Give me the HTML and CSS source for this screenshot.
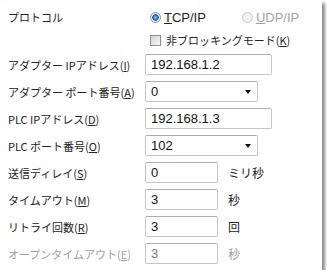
FILE: index.html
```html
<!DOCTYPE html>
<html lang="ja">
<head>
    <meta charset="UTF-8">
    <title>通信設定</title>
    <link rel="stylesheet" href="styles.css">
</head>
<body>
    <div class="panel">
        <div class="row-top">
            <div class="label">プロトコル</div>
            <div class="radio-group">
                <span class="radio checked"></span>
                <span class="opt"><u>T</u>CP/IP</span>
                <span class="radio disabled"></span>
                <span class="opt dim"><u>U</u>DP/IP</span>
            </div>
        </div>
        <div class="row-check">
            <span class="check"></span>
            <span class="jp">非ブロッキングモード(<u>K</u>)</span>
        </div>

        <div class="row">
            <div class="label">アダプター IPアドレス(<u>I</u>)</div>
            <div class="field wide">192.168.1.2</div>
        </div>
        <div class="row">
            <div class="label">アダプター ポート番号(<u>A</u>)</div>
            <div class="field select">0<span class="arrow"></span></div>
        </div>
        <div class="row">
            <div class="label">PLC IPアドレス(<u>D</u>)</div>
            <div class="field wide">192.168.1.3</div>
        </div>
        <div class="row">
            <div class="label">PLC ポート番号(<u>O</u>)</div>
            <div class="field select">102<span class="arrow"></span></div>
        </div>
        <div class="row">
            <div class="label">送信ディレイ(<u>S</u>)</div>
            <div class="field short">0</div>
            <span class="unit">ミリ秒</span>
        </div>
        <div class="row">
            <div class="label">タイムアウト(<u>M</u>)</div>
            <div class="field short">3</div>
            <span class="unit">秒</span>
        </div>
        <div class="row">
            <div class="label">リトライ回数(<u>R</u>)</div>
            <div class="field short">3</div>
            <span class="unit">回</span>
        </div>
        <div class="row off">
            <div class="label">オープンタイムアウト(<u>E</u>)</div>
            <div class="field short">3</div>
            <span class="unit">秒</span>
        </div>
    </div>
</body>
</html>
```

FILE: styles.css
```css
body {
    margin: 0;
    padding: 0;
    background-color: #ffffff;
    font-family: "Noto Sans CJK JP", sans-serif;
    font-size: 11px;
    color: #222222;
}

.panel {
    width: 322px;
    height: 270px;
    box-sizing: border-box;
    padding: 6px 0 0 8px;
    background-color: #ffffff;
    box-shadow: 3px 3px 3px 0 #8c8c8c;
}

.label {
    width: 137px;
    flex-shrink: 0;
    white-space: nowrap;
}

.row-top {
    display: flex;
    align-items: center;
    height: 22px;
}

.radio-group {
    display: flex;
    align-items: center;
    padding-left: 5px;
}

.radio {
    width: 11px;
    height: 11px;
    box-sizing: border-box;
    border-radius: 50%;
    border: 1px solid #8a8d90;
    background: linear-gradient(#e6e6e6, #ffffff);
}

.radio.checked {
    background: radial-gradient(circle, #9fd2f4 0, #2e78c4 2px, #1d5da8 3px, #f2f2f2 3.5px, #e4e4e4 100%);
}

.radio.disabled {
    border-color: #c9cbcc;
    background: #f2f2f2;
}

.opt {
    font-family: "Liberation Sans", sans-serif;
    font-size: 13px;
    margin-left: 3px;
    margin-right: 36px;
}

.dim {
    color: #a3a3a3;
}

.row-check {
    display: flex;
    align-items: center;
    height: 22px;
    margin-top: 1px;
    padding-left: 142px;
}

.check {
    width: 11px;
    height: 11px;
    box-sizing: border-box;
    border: 1px solid #8f8f8f;
    background: linear-gradient(135deg, #d4d4d4, #f6f6f6);
    margin-right: 5px;
}

.row {
    display: flex;
    align-items: center;
    height: 27px;
}

.field {
    position: relative;
    height: 21px;
    box-sizing: border-box;
    border: 1px solid #c3c6ca;
    border-top-color: #a9adb2;
    border-radius: 2px;
    padding: 0 5px;
    font-family: "Liberation Sans", sans-serif;
    font-size: 13px;
    line-height: 19px;
    color: #111111;
}

.wide {
    width: 127px;
}

.select {
    width: 113px;
}

.short {
    width: 73px;
}

.arrow {
    position: absolute;
    right: 6px;
    top: 8px;
    width: 0;
    height: 0;
    border-left: 3.5px solid transparent;
    border-right: 3.5px solid transparent;
    border-top: 4px solid #111111;
}

.unit {
    margin-left: 10px;
    font-size: 12px;
}

.off .label,
.off .unit {
    color: #a0a0a0;
}

.off .field {
    color: #7a7a7a;
}
```
